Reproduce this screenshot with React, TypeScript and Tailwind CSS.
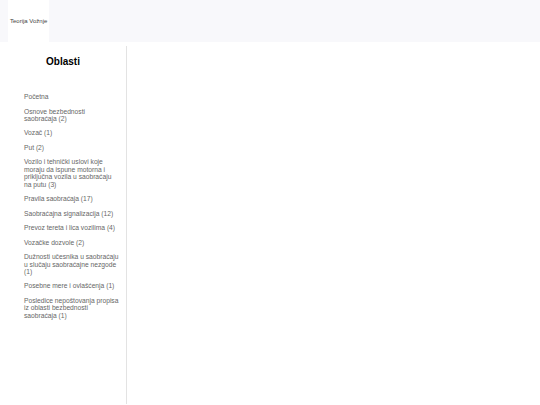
// each entry is split into the lines it wraps to in the sidebar
const areas: string[][] = [
  ["Početna"],
  ["Osnove bezbednosti", "saobraćaja (2)"],
  ["Vozač (1)"],
  ["Put (2)"],
  ["Vozilo i tehnički uslovi koje", "moraju da ispune motorna i", "priključna vozila u saobraćaju", "na putu (3)"],
  ["Pravila saobraćaja (17)"],
  ["Saobraćajna signalizacija (12)"],
  ["Prevoz tereta i lica vozilima (4)"],
  ["Vozačke dozvole (2)"],
  ["Dužnosti učesnika u saobraćaju", "u slučaju saobraćajne nezgode", "(1)"],
  ["Posebne mere i ovlašćenja (1)"],
  ["Posledice nepoštovanja propisa", "iz oblasti bezbednosti", "saobraćaja (1)"],
];

export default function App() {
  return (
    <div className="min-h-[405px] bg-white font-['Liberation_Sans',Arial,sans-serif]">
      <header className="flex h-[42px] bg-[#f8f8fb] pl-2">
        <a className="flex items-center bg-white px-[2px] text-[6px] text-[#444]">Teorija Vožnje</a>
      </header>
      <div className="mt-1 flex">
        <aside className="h-[358px] w-[127px] shrink-0 border-r border-[#e3e3e3]">
          <h2 className="pt-[8px] text-center text-[10px] font-bold text-black">Oblasti</h2>
          <ul className="mt-[24px] flex flex-col gap-[7.1px] pl-[24px] text-[6.7px] leading-[7.4px] text-[#666]">
            {areas.map((lines) => (
              <li key={lines[0]} className="whitespace-nowrap">
                {lines.map((line, i) => (
                  <span key={i} className="block">
                    {line}
                  </span>
                ))}
              </li>
            ))}
          </ul>
        </aside>
        <main className="flex-1" />
      </div>
    </div>
  );
}
